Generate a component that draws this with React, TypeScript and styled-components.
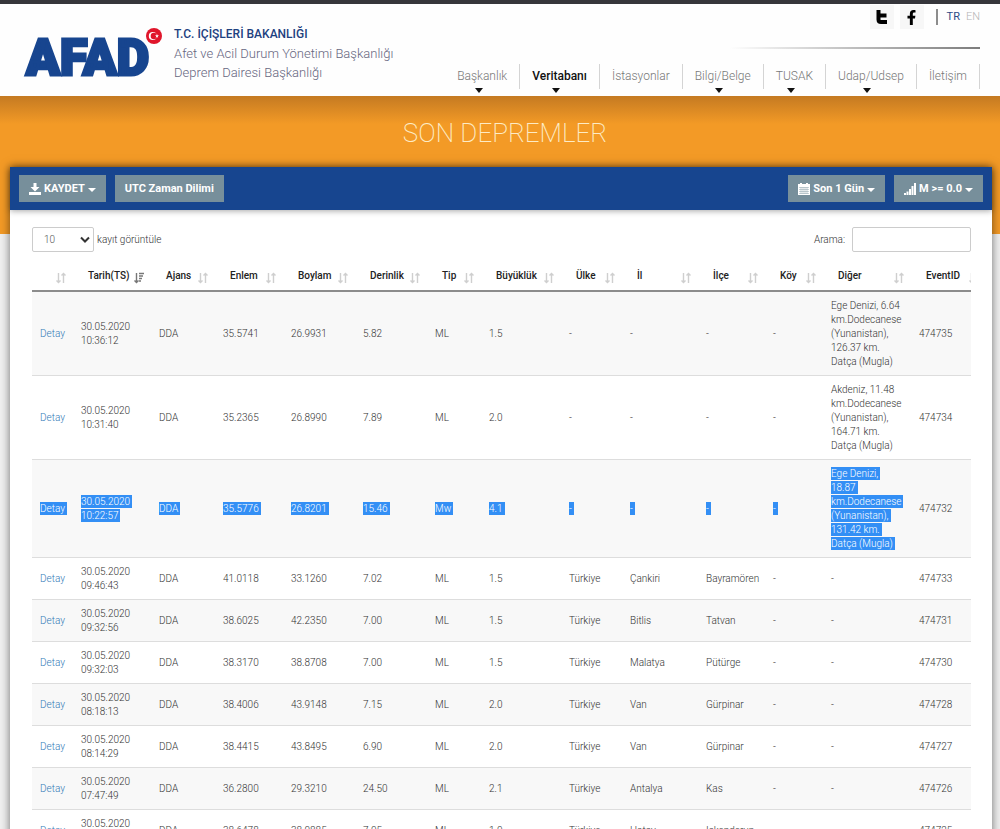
import React from "react";
import styled, { createGlobalStyle } from "styled-components";
import { FaFacebookF } from "react-icons/fa";

const Global = createGlobalStyle`
  *, *::before, *::after { box-sizing: border-box; }
  body {
    margin: 0;
    background: #f0f0f0;
    font-family: Roboto, "Liberation Sans", sans-serif;
    font-size: 10px;
    line-height: 14px;
    color: #333;
  }
  a { text-decoration: none; }
`;

/* ---------- header ---------- */

const Header = styled.header`
  display: flex;
  justify-content: space-between;
  height: 96px;
  padding: 0 20px 0 24px;
  border-top: 4px solid #36363b;
  background: #fefefe;
`;

const Brand = styled.a`
  display: flex;
  align-items: flex-start;
  gap: 12px;
  padding-top: 21px;
`;

const Logo = styled.span`
  display: flex;
  justify-content: space-between;
  width: 138px;
`;

const LogoWord = styled.span`
  padding: 2px 0 0 2px;
  font-size: 50px;
  line-height: 62px;
  font-weight: 900;
  color: #17458f;
  -webkit-text-stroke: 3px #17458f;
`;

const LogoFlag = styled.svg`
  flex: none;
  width: 16px;
  height: 16px;
  margin: 3px 0 0 -8px;
`;

const Ministry = styled.span`
  display: flex;
  flex-direction: column;
  font-size: 13px;
  line-height: 19px;
  font-weight: 300;
  color: #66667f;
  white-space: nowrap;
`;

const MinistryName = styled.strong`
  font-size: 12px;
  font-weight: 500;
  color: #1d4180;
`;

const HeaderSide = styled.div`
  display: flex;
  flex-direction: column;
  align-items: flex-end;
`;

const TopLinks = styled.div`
  display: flex;
  align-items: center;
  height: 26px;
  gap: 6px;
`;

const Social = styled.a`
  display: grid;
  place-items: center;
  width: 24px;
  height: 24px;
  background: #f7f7f7;
  color: #000;
`;

const Languages = styled.div`
  display: flex;
  gap: 6px;
  margin-left: 6px;
  padding-left: 9px;
  border-left: 2px solid #8d8d8d;
  font-size: 11px;
  line-height: 16px;
`;

const Language = styled.a<{ $active?: boolean }>`
  color: ${(p) => (p.$active ? "#2c4a86" : "#b5b5b5")};
  font-weight: ${(p) => (p.$active ? 400 : 300)};
`;

const FadeLine = styled.div`
  width: 250px;
  height: 2px;
  margin: 17px 0 15px;
  background: linear-gradient(to right, transparent, #7c7c7c);
`;

const Nav = styled.nav`
  display: flex;
`;

const NavItem = styled.a<{ $active?: boolean; $menu?: boolean }>`
  display: flex;
  flex-direction: column;
  align-items: center;
  height: 30px;
  padding: 2px 13px 0 12px;
  font-size: 12px;
  line-height: 20px;
  font-weight: ${(p) => (p.$active ? 500 : 300)};
  color: ${(p) => (p.$active ? "#111" : "#777")};
  background: linear-gradient(#d4d4d4, #d4d4d4) right top / 1px 25px no-repeat;
  &::after {
    content: "";
    margin: 2px 7px 0 0;
    border: 4px solid transparent;
    border-top: 5px solid ${(p) => (p.$menu ? "#111" : "transparent")};
    border-bottom: 0;
  }
`;

/* ---------- page body ---------- */

const Main = styled.main`
  padding: 0 8px 24px 10px;
  background:
    linear-gradient(rgba(150, 90, 30, 0.5), rgba(243, 154, 38, 0)) top / 100% 28px no-repeat,
    linear-gradient(#f39a26, #f39a26) top / 100% 138px no-repeat;
`;

const Title = styled.h1`
  margin: 0;
  padding: 17px 0 14px 8px;
  font-size: 26px;
  line-height: 40px;
  font-weight: 200;
  text-align: center;
  color: #fdebc5;
`;

const Panel = styled.section`
  background: #fff;
  box-shadow: 0 0 9px rgba(0, 0, 0, 0.55);
`;

const Toolbar = styled.div`
  display: flex;
  gap: 9px;
  height: 43px;
  padding: 8px 9px;
  background: #17458f;
  box-shadow: 0 1px 6px rgba(0, 0, 0, 0.35);
`;

const Spacer = styled.div`
  flex: 1;
`;

const ToolButton = styled.button`
  display: flex;
  align-items: center;
  gap: 3px;
  padding: 0 10px;
  border: 0;
  background: #778f9b;
  color: #fff;
  font: 700 11px/27px Roboto, sans-serif;
  white-space: nowrap;
`;

const Caret = styled.span`
  margin-top: 2px;
  border: 4px solid transparent;
  border-top-color: #fff;
  border-bottom: 0;
`;

const PanelBody = styled.div`
  padding: 17px 21px 20px 22px;
`;

const Controls = styled.div`
  display: flex;
  justify-content: space-between;
  font-weight: 300;
`;

const ControlLabel = styled.label`
  display: flex;
  align-items: center;
  gap: 3px;
`;

const LengthSelect = styled.span`
  position: relative;
  display: flex;
  svg {
    position: absolute;
    right: 4px;
    top: 9px;
    pointer-events: none;
  }
`;

const Select = styled.select`
  appearance: none;
  width: 62px;
  height: 25px;
  padding: 0 11px;
  border: 1px solid #ccc;
  border-radius: 2px;
  background: #fff;
  color: #555;
  font: 300 10px/14px Roboto, sans-serif;
`;

const SearchInput = styled.input`
  width: 119px;
  height: 25px;
  margin-left: 4px;
  padding: 0 8px;
  border: 1px solid #ccc;
  border-radius: 2px;
  background: #fff;
  font: 300 10px/14px Roboto, sans-serif;
`;

const TableWrap = styled.div`
  margin-top: 8px;
  overflow-x: hidden;
`;

const Table = styled.table`
  table-layout: fixed;
  width: 100%;
  min-width: 954px;
  border-collapse: separate;
  border-spacing: 0;
`;

const Th = styled.th`
  height: 32px;
  padding: 2px 7px 0 15px;
  border-bottom: 2px solid #8c8c8c;
  text-align: left;
  font-weight: 500;
  color: #222;
  white-space: nowrap;
`;

const ThContent = styled.span`
  display: flex;
  align-items: center;
  justify-content: space-between;
  svg { margin-top: 3px; flex: none; }
`;

const Row = styled.tr`
  &:nth-child(odd) { background: #f8f8f8; }
`;

const Td = styled.td`
  padding: 7px 0 6px 8px;
  border-bottom: 1px solid #ddd;
  font-weight: 300;
  vertical-align: middle;
  white-space: nowrap;
`;

const Line = styled.span`
  display: block;
`;

const Marked = styled.span<{ $on: boolean }>`
  ${(p) => p.$on && "background: #338ff5; color: #fff; padding: 1px 2px 1px 0;"}
`;

const DetailLink = styled.a`
  color: #337ab7;
`;

/* ---------- icons ---------- */

const TwitterIcon = () => (
  <svg width="14" height="16" viewBox="0 0 14 16" fill="none" stroke="currentColor" strokeWidth="4" strokeLinejoin="round" aria-hidden="true">
    <path d="M3.500 1V10.500Q3.500 13 6 13H12M3.500 6.500H11.500" />
  </svg>
);

const SaveIcon = () => (
  <svg width="12" height="12" viewBox="0 0 12 12" fill="#fff" aria-hidden="true">
    <path d="M4.500 0h3v4h3L6 8.500 1.500 4h3zM0 9h12v3H0z" />
  </svg>
);

const CalendarIcon = () => (
  <svg width="12" height="12" viewBox="0 0 12 12" aria-hidden="true">
    <path d="M0 1h2V0h2v1h4V0h2v1h2v11H0z" fill="#fff" />
    <path d="M1 4.500h10M1 6.500h10M1 8.500h10M1 10.500h10M3 4v7M5 4v7M7 4v7M9 4v7" stroke="#778f9b" strokeWidth=".4" />
  </svg>
);

const SignalIcon = () => (
  <svg width="12" height="12" viewBox="0 0 12 12" fill="#fff" aria-hidden="true">
    <path d="M0 10h2v2H0zM2.500 8.500h2V12h-2zM5 6h2v6H5zM7.500 3h2v9h-2zM10 0h2v12h-2z" />
  </svg>
);

const SortIcon = ({ sorted }: { sorted?: boolean }) => (
  <svg width="10" height="12" viewBox="0 0 10 12" fill="none" stroke={sorted ? "#777" : "#cfcfcf"} strokeWidth="1.400" aria-hidden="true">
    <path d="M2.500 1v9.500M.5 8.500l2 2 2-2" />
    {sorted ? <path d="M5 1.500h5M5 4h4M5 6.500h3M5 9h2" /> : <path d="M7.500 11V1.500M5.500 3.500l2-2 2 2" />}
  </svg>
);

/* ---------- data ---------- */

const navItems = [
  { label: "Başkanlık", menu: true },
  { label: "Veritabanı", menu: true, active: true },
  { label: "İstasyonlar" },
  { label: "Bilgi/Belge", menu: true },
  { label: "TUSAK", menu: true },
  { label: "Udap/Udsep", menu: true },
  { label: "İletişim" },
];

const columns: [string, number][] = [
  ["", 41], ["Tarih(TS)", 78], ["Ajans", 64], ["Enlem", 68], ["Boylam", 72],
  ["Derinlik", 72], ["Tip", 54], ["Büyüklük", 80], ["Ülke", 61], ["İl", 76],
  ["İlçe", 67], ["Köy", 58], ["Diğer", 88], ["EventID", 75],
];

const day = "30.05.2020";

const quakes: string[][] = [
  [`${day}|10:36:12`, "DDA", "35.5741", "26.9931", "5.82", "ML", "1.5", "-", "-", "-", "-", "Ege Denizi, 6.64|km.Dodecanese|(Yunanistan),|126.37 km.|Datça (Mugla)", "474735"],
  [`${day}|10:31:40`, "DDA", "35.2365", "26.8990", "7.89", "ML", "2.0", "-", "-", "-", "-", "Akdeniz, 11.48|km.Dodecanese|(Yunanistan),|164.71 km.|Datça (Mugla)", "474734"],
  [`${day}|10:22:57`, "DDA", "35.5776", "26.8201", "15.46", "Mw", "4.1", "-", "-", "-", "-", "Ege Denizi,|18.87|km.Dodecanese|(Yunanistan),|131.42 km.|Datça (Mugla)", "474732"],
  [`${day}|09:46:43`, "DDA", "41.0118", "33.1260", "7.02", "ML", "1.5", "Türkiye", "Çankiri", "Bayramören", "-", "-", "474733"],
  [`${day}|09:32:56`, "DDA", "38.6025", "42.2350", "7.00", "ML", "1.5", "Türkiye", "Bitlis", "Tatvan", "-", "-", "474731"],
  [`${day}|09:32:03`, "DDA", "38.3170", "38.8708", "7.00", "ML", "1.5", "Türkiye", "Malatya", "Pütürge", "-", "-", "474730"],
  [`${day}|08:18:13`, "DDA", "38.4006", "43.9148", "7.15", "ML", "2.0", "Türkiye", "Van", "Gürpinar", "-", "-", "474728"],
  [`${day}|08:14:29`, "DDA", "38.4415", "43.8495", "6.90", "ML", "2.0", "Türkiye", "Van", "Gürpinar", "-", "-", "474727"],
  [`${day}|07:47:49`, "DDA", "36.2800", "29.3210", "24.50", "ML", "2.1", "Türkiye", "Antalya", "Kas", "-", "-", "474726"],
  [`${day}|07:31:08`, "DDA", "38.6478", "38.0885", "7.05", "ML", "1.0", "Türkiye", "Hatay", "Iskenderun", "-", "-", "474725"],
];

const selectedEvent = "474732";

export default function App() {
  return (
    <>
      <Global />
      <Header>
        <Brand href="#">
          <Logo>
            <LogoWord>AFAD</LogoWord>
            <LogoFlag viewBox="0 0 16 16" aria-hidden="true">
              <circle cx="8" cy="8" r="8" fill="#e0162b" />
              <circle cx="6.800" cy="8" r="4" fill="#fff" />
              <circle cx="7.900" cy="8" r="3.200" fill="#e0162b" />
              <path d="M11 5.900l.5 1.400 1.500.1-1.200.9.400 1.500-1.200-.9-1.300.9.500-1.500-1.200-.9 1.500-.1z" fill="#fff" />
            </LogoFlag>
          </Logo>
          <Ministry>
            <MinistryName>T.C. İÇİŞLERİ BAKANLIĞI</MinistryName>
            <span>Afet ve Acil Durum Yönetimi Başkanlığı</span>
            <span>Deprem Dairesi Başkanlığı</span>
          </Ministry>
        </Brand>
        <HeaderSide>
          <TopLinks>
            <Social href="#" aria-label="Twitter"><TwitterIcon /></Social>
            <Social href="#" aria-label="Facebook"><FaFacebookF size={15} /></Social>
            <Languages>
              <Language href="#" $active>TR</Language>
              <Language href="#">EN</Language>
            </Languages>
          </TopLinks>
          <FadeLine />
          <Nav>
            {navItems.map((item) => (
              <NavItem key={item.label} href="#" $active={item.active} $menu={item.menu}>
                {item.label}
              </NavItem>
            ))}
          </Nav>
        </HeaderSide>
      </Header>
      <Main>
        <Title>SON DEPREMLER</Title>
        <Panel>
          <Toolbar>
            <ToolButton type="button"><SaveIcon />KAYDET<Caret /></ToolButton>
            <ToolButton type="button">UTC Zaman Dilimi</ToolButton>
            <Spacer />
            <ToolButton type="button"><CalendarIcon />Son 1 Gün<Caret /></ToolButton>
            <ToolButton type="button"><SignalIcon />M &gt;= 0.0<Caret /></ToolButton>
          </Toolbar>
          <PanelBody>
            <Controls>
              <ControlLabel>
                <LengthSelect>
                  <Select defaultValue="10">
                    <option>10</option>
                    <option>25</option>
                    <option>50</option>
                    <option>100</option>
                  </Select>
                  <svg width="10" height="8" viewBox="0 0 10 8" fill="none" stroke="#333" strokeWidth="2" aria-hidden="true">
                    <path d="M1 1.500l4 4 4-4" />
                  </svg>
                </LengthSelect>
                kayıt görüntüle
              </ControlLabel>
              <ControlLabel>
                Arama:
                <SearchInput type="search" />
              </ControlLabel>
            </Controls>
            <TableWrap>
              <Table>
                <colgroup>
                  {columns.map(([name, width]) => <col key={name} width={width} />)}
                </colgroup>
                <thead>
                  <tr>
                    {columns.map(([name]) => (
                      <Th key={name} scope="col">
                        <ThContent><span>{name}</span><SortIcon sorted={name === "Tarih(TS)"} /></ThContent>
                      </Th>
                    ))}
                  </tr>
                </thead>
                <tbody>
                  {quakes.map((cells) => {
                    const id = cells[cells.length - 1];
                    const selected = id === selectedEvent;
                    return (
                      <Row key={id}>
                        <Td><DetailLink href="#"><Marked $on={selected}>Detay</Marked></DetailLink></Td>
                        {cells.map((cell, i) => (
                          <Td key={i}>
                            {cell.split("|").map((line) => (
                              <Line key={line}>
                                <Marked $on={selected && i < cells.length - 1}>{line}</Marked>
                              </Line>
                            ))}
                          </Td>
                        ))}
                      </Row>
                    );
                  })}
                </tbody>
              </Table>
            </TableWrap>
          </PanelBody>
        </Panel>
      </Main>
    </>
  );
}
